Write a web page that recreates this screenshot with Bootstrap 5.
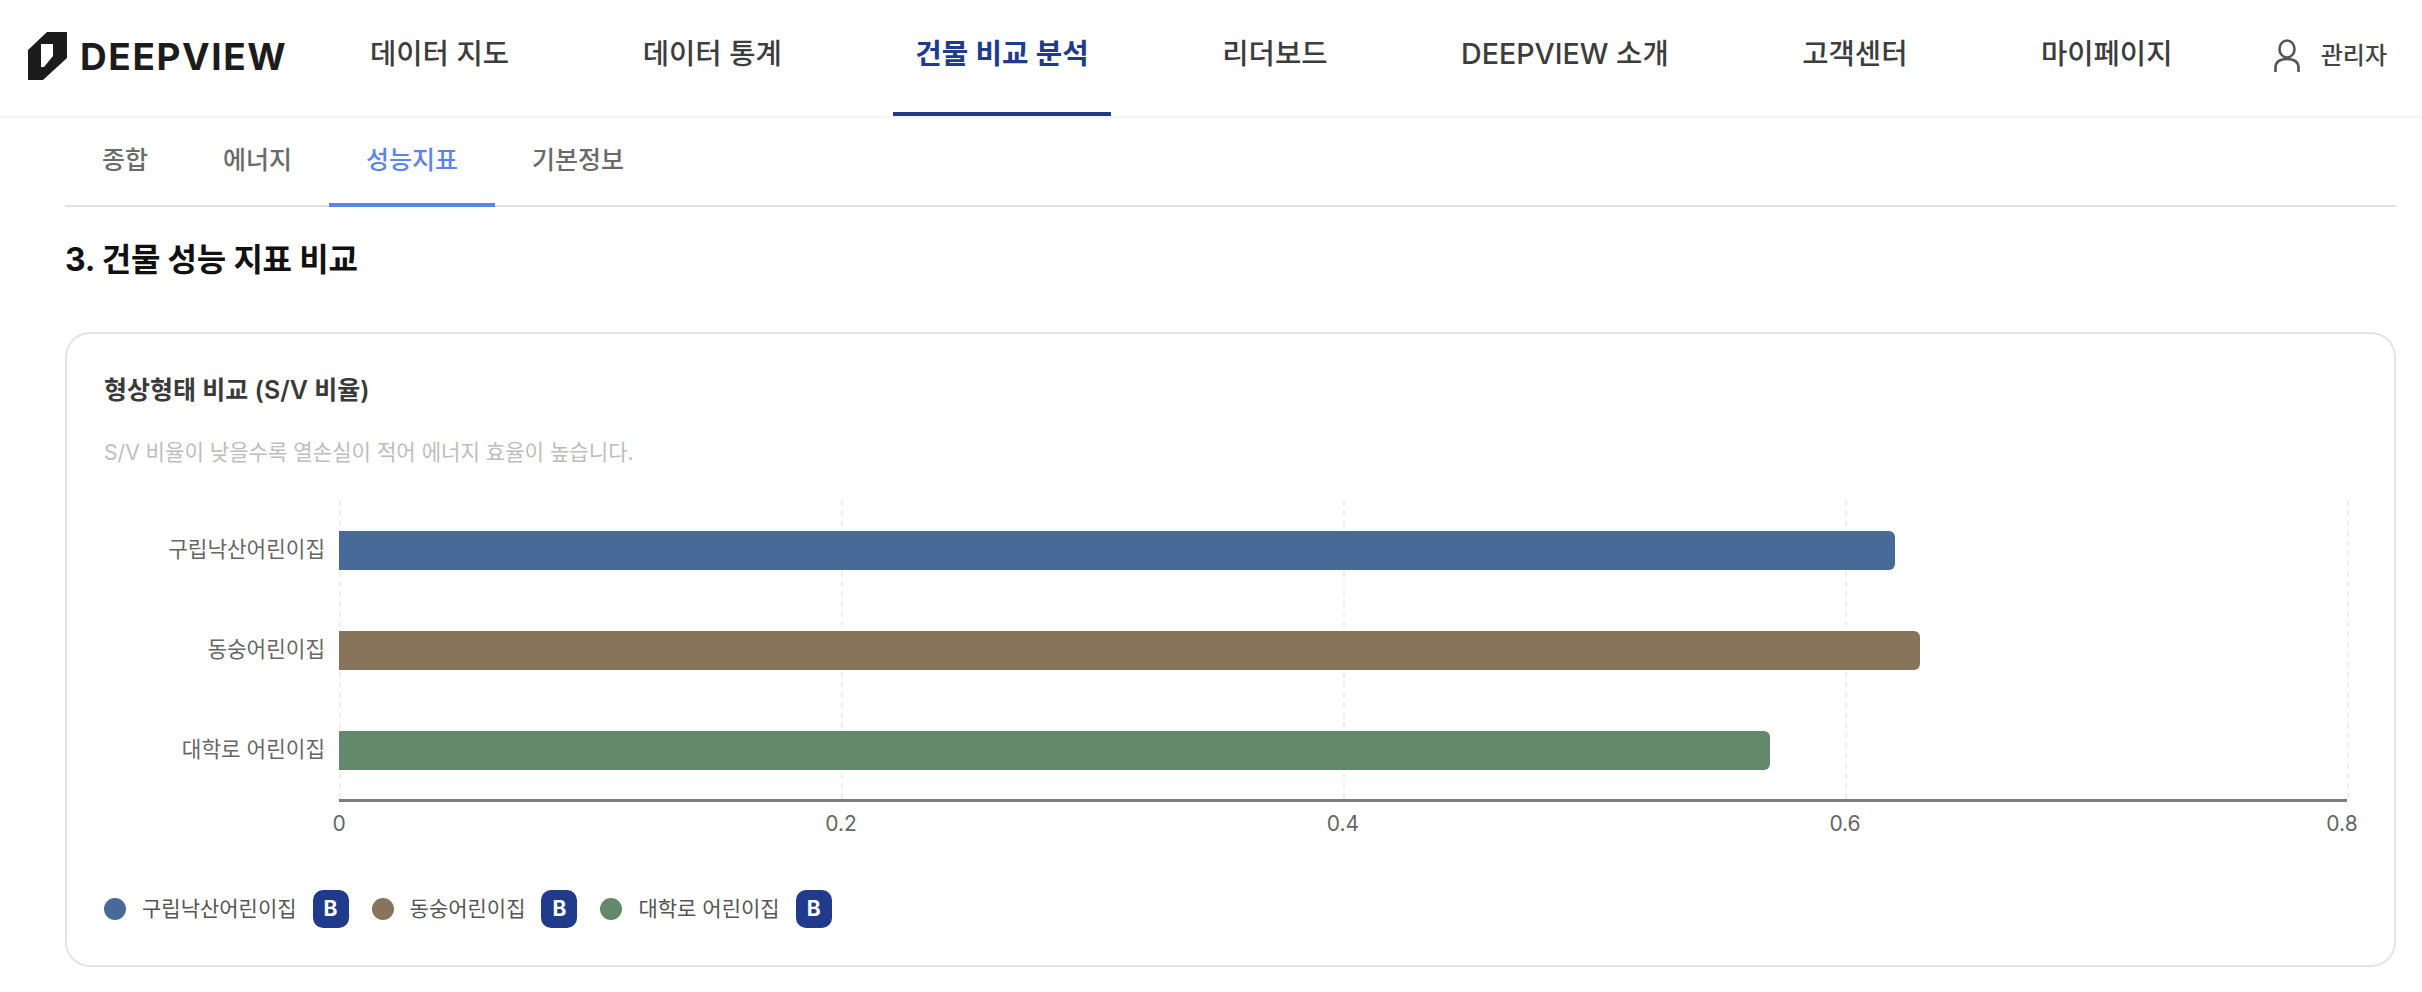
<!DOCTYPE html>
<html lang="ko">

<head>
    <meta charset="UTF-8" />
    <meta name="viewport" content="width=device-width, initial-scale=1.0" />
    <title>DEEPVIEW 건물 비교 분석</title>
    <link href="https://cdn.jsdelivr.net/npm/bootstrap@5.3.3/dist/css/bootstrap.min.css" rel="stylesheet" />
    <style>
        body {
            background-color: #fff;
            font-family: Inter, "Noto Sans CJK KR", sans-serif;
            color: #333;
            overflow: hidden;
        }

        .top-header {
            height: 118px;
            padding: 0 35px 4px 28px;
            border-bottom: 2px solid #f4f4f4;
        }

        .brand-logo {
            width: 320px;
            gap: 13px;
        }

        .brand-name {
            font-size: 37px;
            font-weight: 700;
            color: #1c1c1c;
            line-height: 1;
            letter-spacing: 1.6px;
        }

        .main-menu {
            gap: 89.5px;
            align-self: flex-start;
        }

        .main-menu a {
            display: flex;
            align-items: center;
            height: 116px;
            padding: 0 22px 4px;
            font-size: 28.6px;
            font-weight: 500;
            color: #3d3d3d;
            text-decoration: none;
            white-space: nowrap;
            border-bottom: 4px solid transparent;
        }

        .main-menu a.active {
            color: #213b8c;
            font-size: 28.8px;
            font-weight: 600;
            border-bottom-color: #213b8c;
        }

        .admin-box {
            gap: 21px;
            font-size: 24px;
            font-weight: 500;
            color: #444;
        }

        .page-body {
            padding: 0 26px 0 65px;
        }

        .sub-tabs {
            height: 89px;
            border-bottom: 2px solid #e2e2e2;
        }

        .sub-tabs a {
            display: flex;
            align-items: center;
            height: 89px;
            padding: 0 37px;
            font-size: 25px;
            font-weight: 500;
            color: #6a6a6a;
            text-decoration: none;
            border-bottom: 4px solid transparent;
        }

        .sub-tabs a:first-child {
            padding-right: 38px;
        }

        .sub-tabs a.active {
            color: #5b84ee;
            border-bottom-color: #5b84ee;
        }

        .section-title {
            margin: 33px 0 52px;
            font-size: 32px;
            line-height: 40px;
            font-weight: 700;
            letter-spacing: -0.2px;
            color: #111;
        }

        .chart-card {
            height: 635px;
            padding: 38px 47px 0 37px;
            border: 2px solid #e4e4e4;
            border-radius: 25px;
        }

        .chart-title {
            margin: 0;
            font-size: 25px;
            line-height: 36px;
            font-weight: 600;
            color: #3a3a3a;
        }

        .chart-desc {
            margin: 27px 0 0;
            font-size: 21.1px;
            line-height: 36px;
            color: #bdbdbd;
        }

        .chart-body {
            margin-top: 29px;
        }

        .y-labels {
            width: 235px;
            flex: none;
        }

        .y-labels div {
            height: 100px;
            padding-right: 14px;
            display: flex;
            align-items: center;
            justify-content: end;
            font-size: 21.3px;
            color: #666;
        }

        .plot-area {
            position: relative;
            height: 302px;
            border-bottom: 3px solid #7d7d7d;
        }

        .grid-line {
            position: absolute;
            top: 0;
            bottom: 0;
            border-left: 2px dashed #efefef;
        }

        .bar-row {
            position: relative;
            height: 100px;
            display: flex;
            align-items: center;
        }

        .bar-fill {
            height: 39px;
            border-radius: 0 6px 6px 0;
        }

        .x-ticks {
            margin-top: 8px;
            font-size: 21px;
            line-height: 28px;
            color: #666;
        }

        .x-ticks span {
            width: 0;
            display: flex;
            justify-content: center;
        }

        /* the last tick sits a little left of its grid line */
        .x-ticks span:last-child {
            transform: translateX(-5px);
        }

        .chart-legend {
            margin-top: 52px;
            font-size: 21px;
            color: #555;
        }

        .legend-dot {
            width: 22px;
            height: 22px;
            border-radius: 50%;
            margin-right: 16px;
        }

        .legend-grade {
            width: 36px;
            height: 38px;
            margin: 0 23px 0 16px;
            border-radius: 10px;
            background-color: #213b8c;
            color: #fff;
            font-size: 21px;
            font-weight: 700;
        }
    </style>
</head>

<body>

    <header class="top-header d-flex align-items-center">
        <a class="brand-logo d-flex align-items-center text-decoration-none flex-shrink-0" href="#">
            <svg width="39" height="48" viewBox="0 0 39 48">
                <path fill="#1c1c1c" fill-rule="evenodd"
                    d="M19 0H39V26L15 48H0V18ZM13 12V35H16L25 24V12Z" />
            </svg>
            <span class="brand-name">DEEPVIEW</span>
        </a>
        <nav class="main-menu d-flex flex-grow-1">
            <a href="#">데이터 지도</a>
            <a href="#">데이터 통계</a>
            <a href="#" class="active">건물 비교 분석</a>
            <a href="#">리더보드</a>
            <a href="#">DEEPVIEW 소개</a>
            <a href="#">고객센터</a>
            <a href="#">마이페이지</a>
        </nav>
        <div class="admin-box d-flex align-items-center flex-shrink-0">
            <svg width="26" height="34" viewBox="0 0 26 34" fill="none" stroke="#555" stroke-width="2.6">
                <ellipse cx="13" cy="10" rx="7.5" ry="8.5" />
                <path d="M1.5 33V29C1.5 23 6 20 13 20S24.5 23 24.5 29V33" />
            </svg>
            <span>관리자</span>
        </div>
    </header>

    <main class="page-body">
        <div class="sub-tabs d-flex">
            <a href="#">종합</a>
            <a href="#">에너지</a>
            <a href="#" class="active">성능지표</a>
            <a href="#">기본정보</a>
        </div>

        <h2 class="section-title">3. 건물 성능 지표 비교</h2>

        <section class="chart-card">
            <h3 class="chart-title">형상형태 비교 (S/V 비율)</h3>
            <p class="chart-desc">S/V 비율이 낮을수록 열손실이 적어 에너지 효율이 높습니다.</p>

            <div class="chart-body d-flex">
                <div class="y-labels">
                    <div>구립낙산어린이집</div>
                    <div>동숭어린이집</div>
                    <div>대학로 어린이집</div>
                </div>
                <div class="flex-grow-1">
                    <div class="plot-area">
                        <i class="grid-line" style="left: 0"></i>
                        <i class="grid-line" style="left: 25%"></i>
                        <i class="grid-line" style="left: 50%"></i>
                        <i class="grid-line" style="left: 75%"></i>
                        <i class="grid-line" style="left: 100%"></i>
                        <div class="bar-row"><div class="bar-fill" style="width: 77.5%; background-color: #486a98"></div></div>
                        <div class="bar-row"><div class="bar-fill" style="width: 78.75%; background-color: #88745a"></div></div>
                        <div class="bar-row"><div class="bar-fill" style="width: 71.25%; background-color: #64886b"></div></div>
                    </div>
                    <div class="x-ticks d-flex justify-content-between">
                        <span>0</span><span>0.2</span><span>0.4</span><span>0.6</span><span>0.8</span>
                    </div>
                </div>
            </div>

            <div class="chart-legend d-flex align-items-center">
                <i class="legend-dot" style="background-color: #486a98"></i>
                <span>구립낙산어린이집</span>
                <b class="legend-grade d-flex align-items-center justify-content-center">B</b>
                <i class="legend-dot" style="background-color: #88745a"></i>
                <span>동숭어린이집</span>
                <b class="legend-grade d-flex align-items-center justify-content-center">B</b>
                <i class="legend-dot" style="background-color: #64886b"></i>
                <span>대학로 어린이집</span>
                <b class="legend-grade d-flex align-items-center justify-content-center">B</b>
            </div>
        </section>
    </main>

    <script src="https://cdn.jsdelivr.net/npm/bootstrap@5.3.3/dist/js/bootstrap.bundle.min.js"></script>
</body>

</html>
